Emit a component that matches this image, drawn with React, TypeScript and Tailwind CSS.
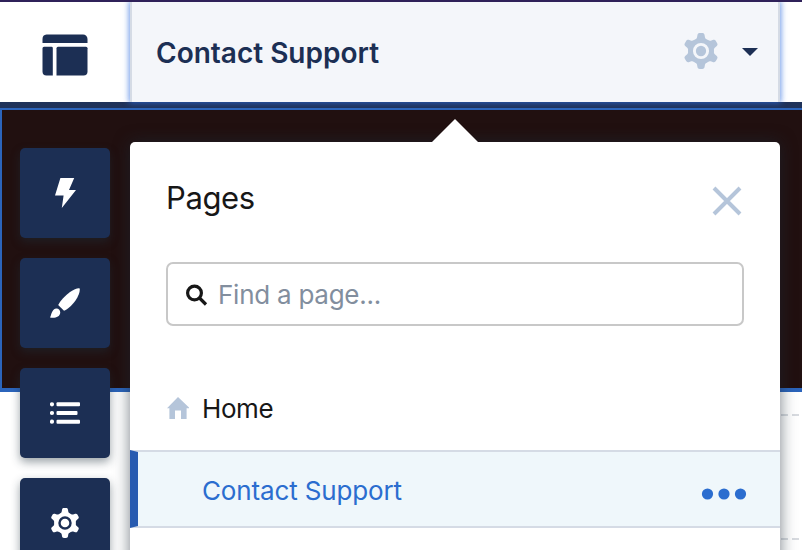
import React from "react";

const toothAngles = [0, 60, 120, 180, 240, 300];

function Gear({ className, ring }: { className: string; ring: string }) {
  return (
    <svg viewBox="-18 -18 36 36" className={className} fill="currentColor">
      {toothAngles.map((a) => (
        <path
          key={a}
          transform={`rotate(${a})`}
          d="M0 0L-6.500 -11.200C-5.200 -11.700 -4.400 -12.300 -4 -13.600L-3.500 -16.200C-3.200 -17.400 -2.400 -17.900 -1.300 -17.900H1.300C2.400 -17.900 3.200 -17.400 3.500 -16.200L4 -13.600C4.400 -12.300 5.200 -11.700 6.500 -11.200Z"
        />
      ))}
      <circle r="12.7" />
      <circle r="6.6" fill="none" stroke={ring} strokeWidth="2.9" />
    </svg>
  );
}

function Tool({ children }: { children: React.ReactNode }) {
  return (
    <button className="flex h-[90px] w-[90px] shrink-0 items-center justify-center rounded-[5px] bg-[#1c2f54] text-white shadow-[0_4px_10px_rgba(32,48,60,0.45)]">
      {children}
    </button>
  );
}

export default function App() {
  return (
    <div className="relative flex h-[550px] w-[802px] flex-col overflow-hidden bg-white font-['Inter','Liberation_Sans',sans-serif]">
      <header className="flex h-[108px] shrink-0 overflow-hidden border-t-2 border-t-[#2f2159] bg-[linear-gradient(#fff_100px,#1f3259_100px)] pb-[6px]">
        <div className="flex w-[130px] shrink-0 items-center justify-center">
          <svg width="46" height="42" viewBox="0 0 46 42" className="mt-[6px] text-[#1c2f54]" fill="currentColor">
            <path d="M4.5 .5H41a4.500 4.500 0 0 1 4.500 4.500V9H.5V5A4.500 4.500 0 0 1 4.500 .5Z" />
            <path d="M2 12.700H9.500a1.300 1.300 0 0 1 1.300 1.300V41.500H4.500A4 4 0 0 1 .5 37.500V14.200A1.500 1.500 0 0 1 2 12.700Z" />
            <path d="M16 12.700H44a1.500 1.500 0 0 1 1.500 1.500V37.500a4 4 0 0 1-4 4H14.500V14.200A1.500 1.500 0 0 1 16 12.700Z" />
          </svg>
        </div>
        <div className="flex w-[650px] shrink-0 items-center border-x-2 border-[#d5dbe5] bg-[#f4f6fa] pr-5 pl-6 shadow-[0_0_6px_1px_rgba(45,110,225,0.7)]">
          <h1 className="flex-1 pt-px text-[28px] font-semibold whitespace-nowrap text-[#1c2f54]">Contact Support</h1>
          <Gear className="mb-0.5 h-9 w-9 text-[#b5c5da]" ring="#f4f6fa" />
          <svg width="16" height="8" viewBox="0 0 16 8" className="ml-[23px]" fill="#1c2f54">
            <path d="M0 0H16L8 8Z" />
          </svg>
        </div>
      </header>
      <section className="h-[284px] shrink-0 border-t-2 border-b-4 border-l-2 border-[#2b64bb] bg-[#211010]" />
      <main className="flex flex-1 flex-col gap-[122px] bg-white pt-[22px] pl-[780px]">
        <div className="h-0.5 bg-[repeating-linear-gradient(90deg,transparent_0_1px,#d8dbe0_1px_8px,transparent_8px_11px)]" />
        <div className="h-0.5 bg-[repeating-linear-gradient(90deg,transparent_0_1px,#d8dbe0_1px_8px,transparent_8px_11px)]" />
      </main>

      <aside className="absolute top-[148px] left-5 flex flex-col gap-5">
        <Tool>
          <svg width="21" height="30" viewBox="0 0 21 30" fill="currentColor">
            <path d="M5.400 0H19.200L14 12H21L6.800 30L8.600 17.400H0Z" />
          </svg>
        </Tool>
        <Tool>
          <svg width="30" height="30" viewBox="0 0 30 30" fill="currentColor">
            <path d="M29.500 .2C30.400 2.500 29 7.500 25.500 12.500C21.500 18.200 17 21.500 14 22.800L8.200 17C10.500 12.500 15 7.500 20 4C24 1.200 27.500 -.2 29.500 .2Z" />
            <path d="M0 29.500C1.500 27 1.500 21.500 6 20.500C9 20.300 10.500 22.500 10.200 25C9.800 29 5 30.500 0 29.500Z" />
          </svg>
        </Tool>
        <Tool>
          <svg width="30" height="22" viewBox="0 0 30 22" fill="currentColor">
            <circle cx="2" cy="2.300" r="2.100" />
            <circle cx="2" cy="11" r="2.100" />
            <circle cx="2" cy="19.700" r="2.100" />
            <rect x="6.500" y=".3" width="23.500" height="4" rx="1" />
            <rect x="6.500" y="9" width="21" height="4" rx="1" />
            <rect x="6.500" y="17.700" width="23.500" height="4" rx="1" />
          </svg>
        </Tool>
        <Tool>
          <Gear className="h-[30px] w-[30px]" ring="#1c2f54" />
        </Tool>
      </aside>

      <div className="absolute top-[142px] left-[130px] h-[440px] w-[650px] rounded-[5px] bg-white shadow-[0_0_16px_rgba(28,42,54,0.6)]">
        <svg width="48" height="24" viewBox="0 0 48 24" className="absolute -top-[23px] left-[301px]" fill="white">
          <path d="M0 24L24 0L48 24Z" />
        </svg>
        <div className="flex h-[120px] items-center justify-between pr-[38px] pb-0.5 pl-9">
          <h2 className="-mt-2 text-[31px] leading-none tracking-[-0.4px] text-[#171717]">Pages</h2>
          <svg width="30" height="30" viewBox="0 0 30 30" fill="none" stroke="#b5c5da" strokeWidth="4">
            <path d="M2 2L28 28M28 2L2 28" />
          </svg>
        </div>
        <div className="mx-9 flex h-16 items-center rounded-[7px] border-2 border-[#c8c8c8] pt-px pl-[18px]">
          <svg width="22" height="22" viewBox="0 0 22 22" fill="none" stroke="#171717" strokeWidth="3.200">
            <circle cx="8.500" cy="9" r="6.900" />
            <path d="M13.500 14L20 20.500" />
          </svg>
          <span className="ml-[10px] text-[26px] tracking-[-0.25px] text-[#828e9e]">Find a page...</span>
        </div>
        <ul className="pt-[42px] text-[26px] tracking-[-0.15px]">
          <li className="flex h-[82px] items-center pb-0.5 pl-[37px] text-[#171717]">
            <svg width="22" height="22" viewBox="0 0 22 22" fill="#b5c5da">
              <path d="M11 0L22 10.600V11.300H19.600V22H14V13.600H8V22H2.400V11.300H0Z" />
            </svg>
            <span className="ml-[13px] tracking-[-0.4px]">Home</span>
          </li>
          <li className="flex h-[78px] items-center justify-between border-y-2 border-l-8 border-y-[#d5dbe5] border-l-[#285bb0] bg-[#eff7fb] pt-[3px] pr-[33px] pl-16 text-[#2b6dcf]">
            <span>Contact Support</span>
            <svg width="46" height="12" viewBox="0 0 46 12" className="mt-[7px]" fill="currentColor">
              <circle cx="6.500" cy="6" r="5.600" />
              <circle cx="23" cy="6" r="5.600" />
              <circle cx="39.500" cy="6" r="5.600" />
            </svg>
          </li>
        </ul>
      </div>
    </div>
  );
}
